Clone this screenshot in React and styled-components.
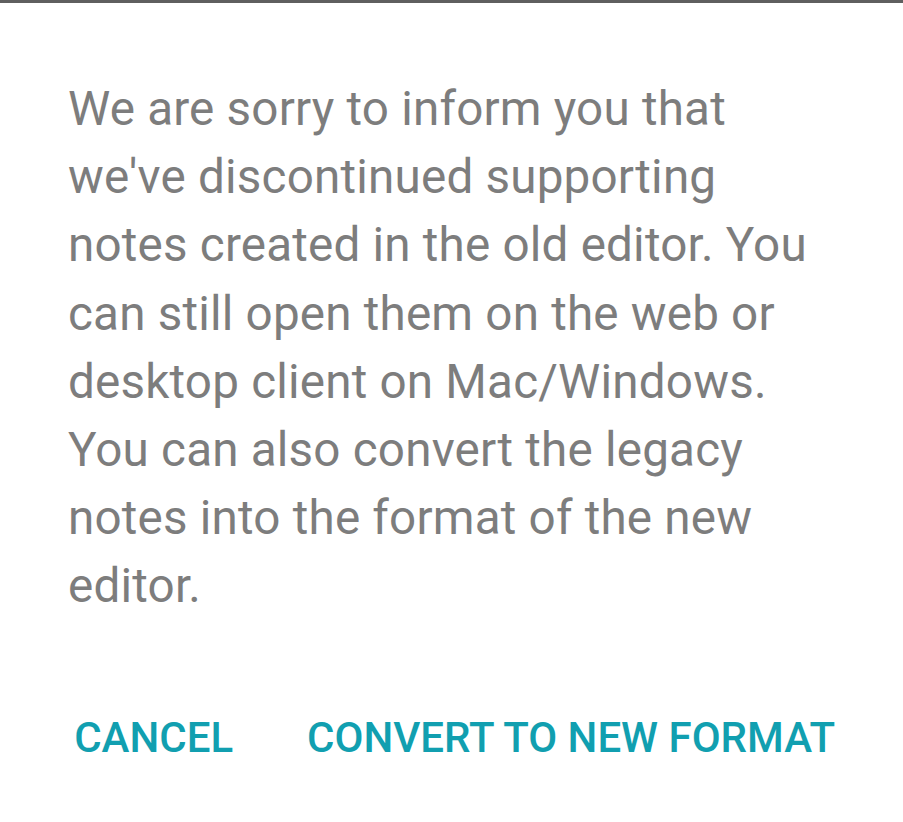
import React from 'react'
import styled, { createGlobalStyle } from 'styled-components'

const Global = createGlobalStyle`
  html, body { margin: 0; padding: 0; background: #fff; }
  body { font-family: Roboto, "Noto Sans", sans-serif; }
`

const Dialog = styled.div`
  width: 903px;
  height: 822px;
  box-sizing: border-box;
  border-top: 3px solid #5f5f5f;
  background: #fff;
  display: flex;
  flex-direction: column;
`

const Message = styled.p`
  margin: 0;
  width: 760px;
  padding: 72px 0 0 68px;
  font-size: 47.6px;
  line-height: 68.2px;
  color: #7d7d7d;
  letter-spacing: 0.2px;
`

const Actions = styled.div`
  display: flex;
  justify-content: flex-end;
  gap: 74px;
  padding: 93px 68px 0 0;
`

const Action = styled.button`
  border: 0;
  background: none;
  padding: 0;
  font-family: Roboto, sans-serif;
  font-weight: 500;
  font-size: 42px;
  line-height: 48px;
  color: #119fb0;
  text-transform: uppercase;
`

export default function App() {
  return (
    <>
      <Global />
      <Dialog>
        <Message>
          We are sorry to inform you that we've discontinued supporting notes created in the old editor. You can still open them on the web or desktop client on Mac/Windows. You can also convert the legacy notes into the format of the new editor.
        </Message>
        <Actions>
          <Action>Cancel</Action>
          <Action>Convert to new format</Action>
        </Actions>
      </Dialog>
    </>
  )
}
